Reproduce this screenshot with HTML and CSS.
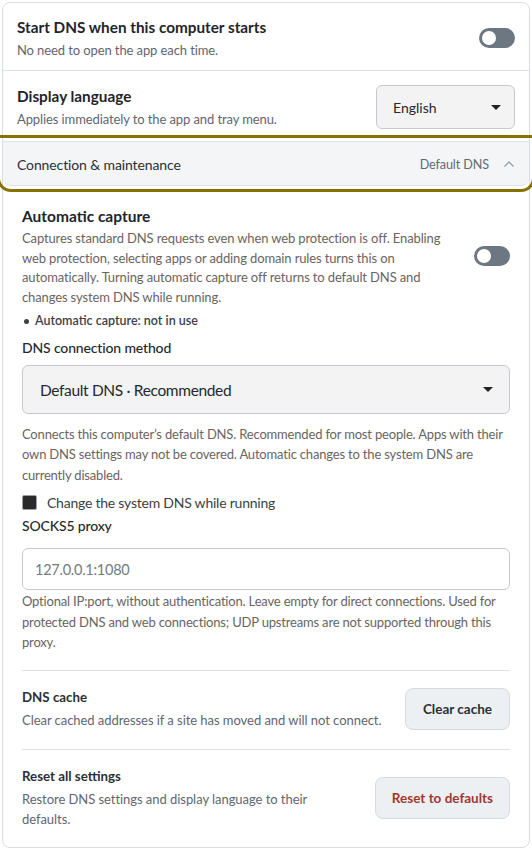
FILE: index.html
```html
<!DOCTYPE html>
<html lang="en">
<head>
    <meta charset="UTF-8">
    <meta name="viewport" content="width=device-width, initial-scale=1.0">
    <title>Settings</title>
    <link rel="stylesheet" href="styles.css">
</head>
<body>
    <div class="card">
        <div class="row">
            <div class="row-text">
                <div class="row-title">Start DNS when this computer starts</div>
                <div class="row-sub">No need to open the app each time.</div>
            </div>
            <span class="toggle"><span class="knob"></span></span>
        </div>
        <div class="row row-lang">
            <div class="row-text">
                <div class="row-title">Display language</div>
                <div class="row-sub">Applies immediately to the app and tray menu.</div>
            </div>
            <div class="select select-small">
                <span>English</span>
                <span class="caret"></span>
            </div>
        </div>

        <div class="section">
            <div class="section-head">
                <span class="section-name">Connection &amp; maintenance</span>
                <span class="section-meta">Default DNS
                    <svg class="chev" width="10" height="6" viewBox="0 0 10 6"><path d="M0.5 5.5 L5 1 L9.5 5.5" fill="none" stroke="#98a0a8" stroke-width="1.3"/></svg>
                </span>
            </div>

            <div class="section-body">
                <div class="capture">
                    <div class="capture-text">
                        <div class="capture-title">Automatic capture</div>
                        <p class="capture-desc">Captures standard DNS requests even when web protection is off. Enabling web protection, selecting apps or adding domain rules turns this on automatically. Turning automatic capture off returns to default DNS and changes system DNS while running.</p>
                    </div>
                    <span class="toggle"><span class="knob"></span></span>
                </div>
                <div class="status"><span class="dot"></span>Automatic capture: not in use</div>

                <div class="label label-method">DNS connection method</div>
                <div class="select select-wide">
                    <span>Default DNS · Recommended</span>
                    <span class="caret"></span>
                </div>
                <p class="help help-method">Connects this computer’s default DNS. Recommended for most people. Apps with their own DNS settings may not be covered. Automatic changes to the system DNS are currently disabled.</p>

                <label class="check">
                    <span class="box"></span>
                    Change the system DNS while running
                </label>

                <div class="label label-proxy">SOCKS5 proxy</div>
                <div class="input">127.0.0.1:1080</div>
                <p class="help help-proxy">Optional IP:port, without authentication. Leave empty for direct connections. Used for protected DNS and web connections; UDP upstreams are not supported through this proxy.</p>

                <div class="action">
                    <div class="action-text">
                        <div class="action-title">DNS cache</div>
                        <div class="action-sub">Clear cached addresses if a site has moved and will not connect.</div>
                    </div>
                    <button class="btn">Clear cache</button>
                </div>
                <div class="action">
                    <div class="action-text action-narrow">
                        <div class="action-title">Reset all settings</div>
                        <div class="action-sub">Restore DNS settings and display language to their defaults.</div>
                    </div>
                    <button class="btn btn-danger">Reset to defaults</button>
                </div>
            </div>
        </div>
    </div>
</body>
</html>
```

FILE: styles.css
```css
* {
    box-sizing: border-box;
}
body {
    margin: 0;
    padding: 2px;
    background: #fff;
    font-family: Lato, "Liberation Sans", sans-serif;
    color: #1f2429;
}
.card {
    border: 1px solid #d9dee4;
    border-radius: 8px;
}

/* top rows */
.row {
    display: flex;
    align-items: center;
    justify-content: space-between;
    padding: 14px 14px 11px 14px;
    border-bottom: 1px solid #dfe3e8;
}
.row-lang {
    padding: 14px 14px 3px 14px;
    border-bottom: none;
}
.row-title {
    font-size: 15.3px;
    font-weight: 700;
    line-height: 20px;
}
.row-sub {
    font-size: 13px;
    letter-spacing: -0.1px;
    color: #5f6670;
    line-height: 18px;
    margin-top: 4px;
}
.toggle {
    width: 36px;
    height: 20px;
    border-radius: 10px;
    background: #6c7781;
    position: relative;
    flex-shrink: 0;
}
.knob {
    position: absolute;
    left: 3px;
    top: 3px;
    width: 14px;
    height: 14px;
    border-radius: 50%;
    background: #fff;
}
.select {
    display: flex;
    align-items: center;
    justify-content: space-between;
    background: #f3f3f4;
    border: 1px solid #c5cad0;
    border-radius: 6px;
    color: #24292e;
}
.select-small {
    width: 139px;
    height: 44px;
    padding: 0 13px 0 16px;
    font-size: 14px;
}
.select-wide {
    height: 49px;
    padding: 0 16px 0 17px;
    font-size: 15.5px;
    letter-spacing: -0.35px;
}
.caret {
    width: 0;
    height: 0;
    border-left: 5px solid transparent;
    border-right: 5px solid transparent;
    border-top: 5px solid #222;
}

/* accordion */
.section {
    padding-top: 9px;
}
.section-head {
    display: flex;
    align-items: center;
    justify-content: space-between;
    height: 45px;
    padding: 1px 15px 0 14px;
    background: #f4f5f7;
    border: 1px solid #dfe3e8;
    border-left: none;
    border-right: none;
    border-radius: 0 0 8px 8px;
    outline: 3px solid #877200;
    outline-offset: 3px;
}
.section-name {
    font-size: 14px;
    letter-spacing: -0.12px;
    color: #2b3036;
}
.section-meta {
    display: flex;
    align-items: center;
    gap: 15px;
    font-size: 12.6px;
    letter-spacing: -0.1px;
    color: #636a72;
}
.section-body {
    padding: 19px 19px 17px 19px;
}
.capture {
    display: flex;
    align-items: center;
    justify-content: space-between;
    gap: 20px;
}
.capture-title {
    font-size: 15.5px;
    font-weight: 700;
    line-height: 22px;
}
.capture-desc {
    margin: 2px 0 0 0;
    font-size: 13px;
    letter-spacing: -0.13px;
    line-height: 19.5px;
    color: #6a6462;
}
.status {
    display: flex;
    align-items: center;
    gap: 6px;
    margin-top: 5px;
    font-size: 12.5px;
    line-height: 18px;
    font-weight: 600;
    color: #3b4147;
}
.dot {
    width: 5px;
    height: 5px;
    border-radius: 50%;
    background: #3b4147;
    margin-left: 2px;
}
.label {
    font-size: 14px;
    letter-spacing: -0.15px;
    font-weight: 500;
    color: #24292e;
    line-height: 20px;
}
.label-method {
    margin: 8px 0 7px 0;
}
.label-proxy {
    margin: 4px 0 12px 0;
}
.help {
    margin: 0;
    font-size: 13px;
    letter-spacing: -0.18px;
    line-height: 20.4px;
    color: #6a6462;
}
.help-method {
    margin-top: 10px;
}
.help-proxy {
    margin-top: 1px;
}
.check {
    display: flex;
    align-items: center;
    gap: 10px;
    height: 20px;
    margin-top: 7px;
    font-size: 14px;
    letter-spacing: -0.23px;
    color: #3a3f45;
}
.box {
    width: 15px;
    height: 15px;
    background: #2a2a2a;
    border: 1px solid #9aa0a6;
    border-radius: 2px;
}
.input {
    height: 42px;
    border: 1px solid #c5cad0;
    border-radius: 6px;
    padding: 0 12px;
    display: flex;
    align-items: center;
    font-size: 14.5px;
    letter-spacing: -0.25px;
    color: #767b80;
}

/* maintenance actions */
.action {
    display: flex;
    align-items: center;
    justify-content: space-between;
    border-top: 1px solid #dfe3e8;
    margin-top: 18px;
    padding-top: 16px;
}
.action-title {
    font-size: 13.3px;
    font-weight: 700;
    color: #2b3036;
    line-height: 20px;
}
.action-sub {
    font-size: 13px;
    letter-spacing: -0.05px;
    color: #5f6670;
    line-height: 20.4px;
    margin-top: 3px;
}
.action-narrow {
    width: 300px;
}
.btn {
    font-family: inherit;
    font-size: 13.5px;
    font-weight: 700;
    color: #2b3036;
    background: #edf0f3;
    border: 1px solid #d6dbe0;
    border-radius: 8px;
    height: 42px;
    padding: 0 17px;
    flex-shrink: 0;
}
.btn-danger {
    color: #a2372f;
    padding: 0 16px;
}
```
